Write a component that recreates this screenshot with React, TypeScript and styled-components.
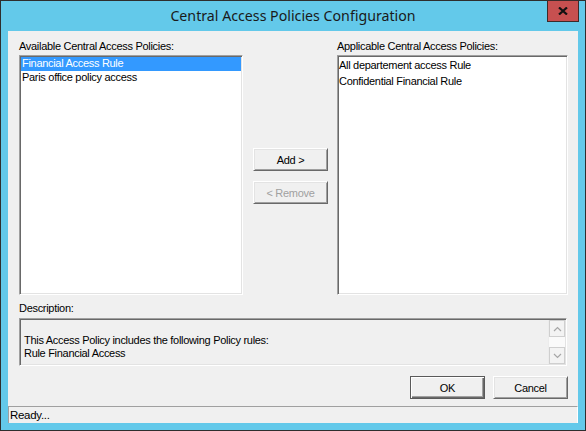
import React from "react";
import styled, { createGlobalStyle } from "styled-components";

const Global = createGlobalStyle`
  html, body { margin: 0; padding: 0; background: #ffffff; }
  body { font-family: "Liberation Sans", Arial, sans-serif; }
  * { box-sizing: border-box; }
`;

const Window = styled.div`
  width: 586px;
  height: 431px;
  border: 1px solid #2e2e2e;
  background: #63c9ea;
  display: flex;
  flex-direction: column;
  padding: 0 7px 7px 7px;
`;

const TitleBar = styled.div`
  height: 30px;
  margin: 0 -7px;
  display: grid;
  grid-template-columns: 1fr auto 1fr;
  align-items: start;
`;

const Title = styled.div`
  grid-column: 2;
  font-family: "Noto Sans", "Liberation Sans", sans-serif;
  font-size: 14.2px;
  line-height: 30px;
  color: #1a1a1a;
  white-space: nowrap;
`;

const CloseButton = styled.div`
  grid-column: 3;
  justify-self: end;
  margin-top: -1px;
  margin-right: 6px;
  width: 32px;
  height: 22px;
  background: #c75050;
  border: 1px solid #3c2a2a;
  display: flex;
  align-items: center;
  justify-content: center;
`;

const Client = styled.div`
  flex: 1;
  background: #f0f0f0;
  display: flex;
  flex-direction: column;
  padding: 9px 11px 0 11px;
  font-size: 11px;
  letter-spacing: -0.3px;
  color: #000;
`;

const Columns = styled.div`
  display: grid;
  grid-template-columns: 224px 75px 230px;
  column-gap: 10px;
  & > :nth-child(3) { margin-left: -1px; }
`;

const Column = styled.div`
  display: flex;
  flex-direction: column;
`;

const Label = styled.div<{ $gap?: number; $top?: number }>`
  line-height: 13px;
  height: 13px;
  margin-top: ${(p) => p.$top ?? 0}px;
  margin-bottom: ${(p) => p.$gap ?? 2}px;
  white-space: nowrap;
`;

const ListBox = styled.div<{ $padTop?: number }>`
  height: 240px;
  background: #ffffff;
  border: 1px solid;
  border-color: #a0a0a0 #ffffff #ffffff #a0a0a0;
  box-shadow: inset 1px 1px 0 #696969, inset -1px -1px 0 #e3e3e3;
  padding: ${(p) => p.$padTop ?? 1}px 1px 1px 1px;
`;

const ListItem = styled.div<{ $selected?: boolean; $h: number; $indent?: number }>`
  height: ${(p) => p.$h}px;
  line-height: ${(p) => p.$h - 1}px;
  padding-left: ${(p) => p.$indent ?? 1}px;
  white-space: nowrap;
  background: ${(p) => (p.$selected ? "#3399ff" : "transparent")};
  color: ${(p) => (p.$selected ? "#ffffff" : "#000000")};
`;

const MiddleColumn = styled.div`
  display: flex;
  flex-direction: column;
  gap: 10px;
  padding-top: 108px;
`;

const Button = styled.div<{ $disabled?: boolean; $default?: boolean }>`
  width: 75px;
  height: 23px;
  display: flex;
  align-items: center;
  justify-content: center;
  background: #f0f0f0;
  color: ${(p) => (p.$disabled ? "#a0a0a0" : "#000000")};
  border: 1px solid;
  border-color: ${(p) =>
    p.$default ? "#5a5a5a" : "#ffffff #696969 #696969 #ffffff"};
  box-shadow: ${(p) =>
    p.$default
      ? "inset 1px 1px 0 #ffffff, inset -1px -1px 0 #696969, inset -2px -2px 0 #a0a0a0"
      : "inset 1px 1px 0 #e3e3e3, inset -1px -1px 0 #a0a0a0"};
  white-space: nowrap;
`;

const DescBox = styled.div`
  height: 48px;
  border: 1px solid;
  border-color: #a0a0a0 #ffffff #ffffff #a0a0a0;
  box-shadow: inset 1px 1px 0 #696969, inset -1px -1px 0 #e3e3e3;
  padding: 2px 1px 1px 4px;
  display: flex;
`;

const DescText = styled.div`
  flex: 1;
  line-height: 13px;
  white-space: pre;
`;

const ScrollBar = styled.div`
  width: 17px;
  display: flex;
  flex-direction: column;
  justify-content: space-between;
  background: #fafafa;
  border-left: 1px solid #ececec;
  margin-top: -1px;
`;

const ScrollButton = styled.div`
  height: 17px;
  border: 1px solid #cfcfcf;
  background: #f3f3f3;
  display: flex;
  align-items: center;
  justify-content: center;
`;

const ButtonRow = styled.div`
  display: flex;
  justify-content: flex-end;
  gap: 8px;
  margin-top: 10px;
  margin-right: -1px;
`;

const StatusBar = styled.div`
  margin: auto -11px 0 -11px;
  height: 17px;
  border-top: 1px solid #a0a0a0;
  border-left: 1px solid #a0a0a0;
  border-right: 1px solid #ffffff;
  padding-left: 1px;
  line-height: 16px;
  font-size: 11.5px;
`;

const Chevron = ({ up }: { up?: boolean }) => (
  <svg width="9" height="6" viewBox="0 0 9 6">
    <polyline
      points={up ? "1,5 4.5,1.5 8,5" : "1,1 4.5,4.5 8,1"}
      fill="none"
      stroke="#a6a6a6"
      strokeWidth="1.2"
    />
  </svg>
);

export default function App() {
  return (
    <>
      <Global />
      <Window>
        <TitleBar>
          <Title>Central Access Policies Configuration</Title>
          <CloseButton>
            <svg width="10" height="8" viewBox="0 0 10 8">
              <path d="M1 0.5 L9 7.5 M9 0.5 L1 7.5" stroke="#111" strokeWidth="2.2" />
            </svg>
          </CloseButton>
        </TitleBar>
        <Client>
          <Columns>
            <Column>
              <Label>Available Central Access Policies:</Label>
              <ListBox>
                <ListItem $h={14} $selected>Financial Access Rule</ListItem>
                <ListItem $h={14}>Paris office policy access</ListItem>
              </ListBox>
            </Column>
            <MiddleColumn>
              <Button>Add &gt;</Button>
              <Button $disabled>&lt; Remove</Button>
            </MiddleColumn>
            <Column>
              <Label>Applicable Central Access Policies:</Label>
              <ListBox $padTop={2}>
                <ListItem $h={16} $indent={0}>All departement access Rule</ListItem>
                <ListItem $h={16} $indent={0}>Confidential Financial Rule</ListItem>
              </ListBox>
            </Column>
          </Columns>
          <Label $top={7} $gap={3}>Description:</Label>
          <DescBox>
            <DescText>{"\nThis Access Policy includes the following Policy rules:\nRule Financial Access"}</DescText>
            <ScrollBar>
              <ScrollButton>
                <Chevron up />
              </ScrollButton>
              <ScrollButton>
                <Chevron />
              </ScrollButton>
            </ScrollBar>
          </DescBox>
          <ButtonRow>
            <Button $default>OK</Button>
            <Button>Cancel</Button>
          </ButtonRow>
          <StatusBar>Ready...</StatusBar>
        </Client>
      </Window>
    </>
  );
}
